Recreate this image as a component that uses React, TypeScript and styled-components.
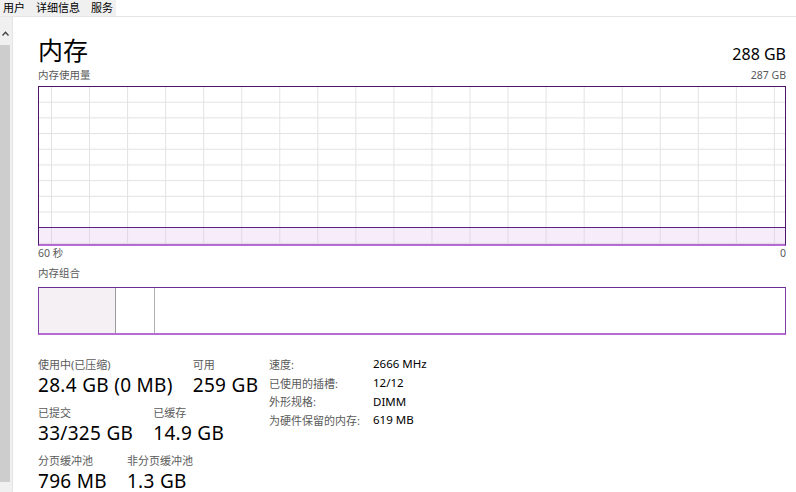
import { Fragment } from 'react'
import styled, { createGlobalStyle } from 'styled-components'

const GlobalStyle = createGlobalStyle`
  html, body {
    margin: 0;
    padding: 0;
    background: #ffffff;
  }
  body {
    font-family: 'Noto Sans', 'Noto Sans CJK SC', sans-serif;
    color: #000000;
  }
`

const COLORS = {
  text: '#000000',
  label: '#5a5a5a',
  grid: '#e2e2e2',
  frame: '#4a1468',
  frameBottom: '#b46cd2',
  fill: 'rgba(226, 190, 238, 0.28)',
  tabBg: '#f0f0f0',
}

const Page = styled.div`
  width: 796px;
  height: 492px;
  display: flex;
  flex-direction: column;
  overflow: hidden;
`

const TabBar = styled.div`
  height: 16px;
  flex: none;
  border-bottom: 1px solid #e6e6e6;
  display: flex;
`

const TabStrip = styled.div`
  display: flex;
  gap: 11px;
  padding: 0 3px;
  background: ${COLORS.tabBg};
`

const Tab = styled.div`
  font-size: 11px;
  line-height: 16px;
  color: ${COLORS.text};
`

const Body = styled.div`
  flex: 1;
  display: flex;
  min-height: 0;
`

const ScrollBar = styled.div`
  width: 12px;
  flex: none;
  background: #f0f0f0;
  border-right: 1px solid #e4e4e4;
  display: flex;
  flex-direction: column;
`

const ScrollArrow = styled.div`
  height: 28px;
  display: flex;
  align-items: center;
  justify-content: center;
  padding-right: 1px;
  padding-top: 4px;
  box-sizing: border-box;
`

const ScrollThumb = styled.div`
  flex: 1;
  margin: 0 2px 10px 0;
  background: #cdcdcd;
`

const Content = styled.div`
  flex: 1;
  padding: 17px 10px 0 25px;
  display: flex;
  flex-direction: column;

  & > * {
    flex-shrink: 0;
  }
`

const HeaderRow = styled.div`
  display: flex;
  justify-content: space-between;
  align-items: baseline;
`

const Title = styled.h1`
  margin: 0;
  font-size: 25px;
  font-weight: 400;
  line-height: 30px;
  font-family: 'Noto Sans CJK SC', sans-serif;
`

const Total = styled.div`
  font-size: 16px;
  line-height: 20px;
`

const CaptionRow = styled.div<{ top?: number; bottom?: number }>`
  display: flex;
  justify-content: space-between;
  font-size: 10.5px;
  line-height: 15px;
  color: ${COLORS.label};
  margin-top: ${(p) => p.top || 0}px;
  margin-bottom: ${(p) => p.bottom || 0}px;
`

const Graph = styled.div`
  height: 160px;
  box-sizing: border-box;
  border: 1px solid ${COLORS.frame};
  border-bottom: 2px solid ${COLORS.frameBottom};
  display: flex;
  flex-direction: column;
  justify-content: flex-end;
  background-image:
    linear-gradient(to right, ${COLORS.grid} 0, ${COLORS.grid} 1px, transparent 1px),
    linear-gradient(to bottom, transparent calc(100% - 1px), ${COLORS.grid} calc(100% - 1px));
  background-size: 38.05px 100%, 100% 15.7px;
  background-position: 12px 0, 0 0;
`

const GraphFill = styled.div`
  border-top: 1px solid #5c2283;
  background: ${COLORS.fill};
`

const CompositionBar = styled.div`
  height: 48px;
  margin-top: 6px;
  box-sizing: border-box;
  border: 1px solid #7d3ea6;
  border-top-color: #6a2d92;
  border-bottom: 2px solid ${COLORS.frameBottom};
  display: flex;
`

const Segment = styled.div<{ shade?: string; edge?: string }>`
  background: ${(p) => p.shade || 'transparent'};
  border-right: ${(p) => (p.edge ? `1px solid ${p.edge}` : 'none')};
`

const Stats = styled.div`
  margin-top: 20px;
  display: flex;
`

const StatColumn = styled.div`
  width: 231px;
  padding-top: 2px;
  display: flex;
  flex-direction: column;
  gap: 7px;
`

const StatRow = styled.div`
  display: flex;
  gap: 20px;
`

const Stat = styled.div`
  display: flex;
  flex-direction: column;
`

const StatLabel = styled.div`
  font-size: 11px;
  line-height: 15px;
  color: ${COLORS.label};
`

const StatValue = styled.div`
  font-size: 19px;
  line-height: 26px;
  letter-spacing: 0.3px;
  color: ${COLORS.text};
`

const Details = styled.div`
  display: grid;
  grid-template-columns: 104px auto;
  grid-auto-rows: 18.7px;
  align-items: center;
`

const DetailLabel = styled.div`
  font-size: 11px;
  line-height: 15px;
  color: ${COLORS.label};
`

const DetailValue = styled.div`
  font-size: 11.5px;
  line-height: 16px;
  color: ${COLORS.text};
`

const stats = [
  [
    { label: '使用中(已压缩)', value: '28.4 GB (0 MB)' },
    { label: '可用', value: '259 GB' },
  ],
  [
    { label: '已提交', value: '33/325 GB' },
    { label: '已缓存', value: '14.9 GB' },
  ],
  [
    { label: '分页缓冲池', value: '796 MB' },
    { label: '非分页缓冲池', value: '1.3 GB' },
  ],
]

const details = [
  ['速度:', '2666 MHz'],
  ['已使用的插槽:', '12/12'],
  ['外形规格:', 'DIMM'],
  ['为硬件保留的内存:', '619 MB'],
]

const usedGb = 28.4
const totalGb = 287

const App = () => {
  const usage = (usedGb / totalGb) * 100

  return (
    <Page>
      <GlobalStyle />
      <TabBar>
        <TabStrip>
          <Tab>用户</Tab>
          <Tab>详细信息</Tab>
          <Tab>服务</Tab>
        </TabStrip>
      </TabBar>
      <Body>
        <ScrollBar>
          <ScrollArrow>
            <svg width="7" height="5" viewBox="0 0 7 5">
              <path d="M0.5 4.5 L3.5 1.2 L6.5 4.5" fill="none" stroke="#404040" strokeWidth="1.3" />
            </svg>
          </ScrollArrow>
          <ScrollThumb />
        </ScrollBar>
        <Content>
          <HeaderRow>
            <Title>内存</Title>
            <Total>288 GB</Total>
          </HeaderRow>
          <CaptionRow top={4} bottom={3}>
            <span>内存使用量</span>
            <span>287 GB</span>
          </CaptionRow>
          <Graph>
            <GraphFill style={{ height: `${usage}%` }} />
          </Graph>
          <CaptionRow>
            <span>60 秒</span>
            <span>0</span>
          </CaptionRow>
          <CaptionRow top={5}>
            <span>内存组合</span>
          </CaptionRow>
          <CompositionBar>
            <Segment shade="#f4f0f3" edge="#9c9c9c" style={{ width: 76 }} />
            <Segment edge="#b0b0b0" style={{ width: 38 }} />
          </CompositionBar>
          <Stats>
            <StatColumn>
              {stats.map((row, i) => (
                <StatRow key={i}>
                  {row.map((s) => (
                    <Stat key={s.label}>
                      <StatLabel>{s.label}</StatLabel>
                      <StatValue>{s.value}</StatValue>
                    </Stat>
                  ))}
                </StatRow>
              ))}
            </StatColumn>
            <Details>
              {details.map(([label, value]) => (
                <Fragment key={label}>
                  <DetailLabel>{label}</DetailLabel>
                  <DetailValue>{value}</DetailValue>
                </Fragment>
              ))}
            </Details>
          </Stats>
        </Content>
      </Body>
    </Page>
  )
}

export default App
